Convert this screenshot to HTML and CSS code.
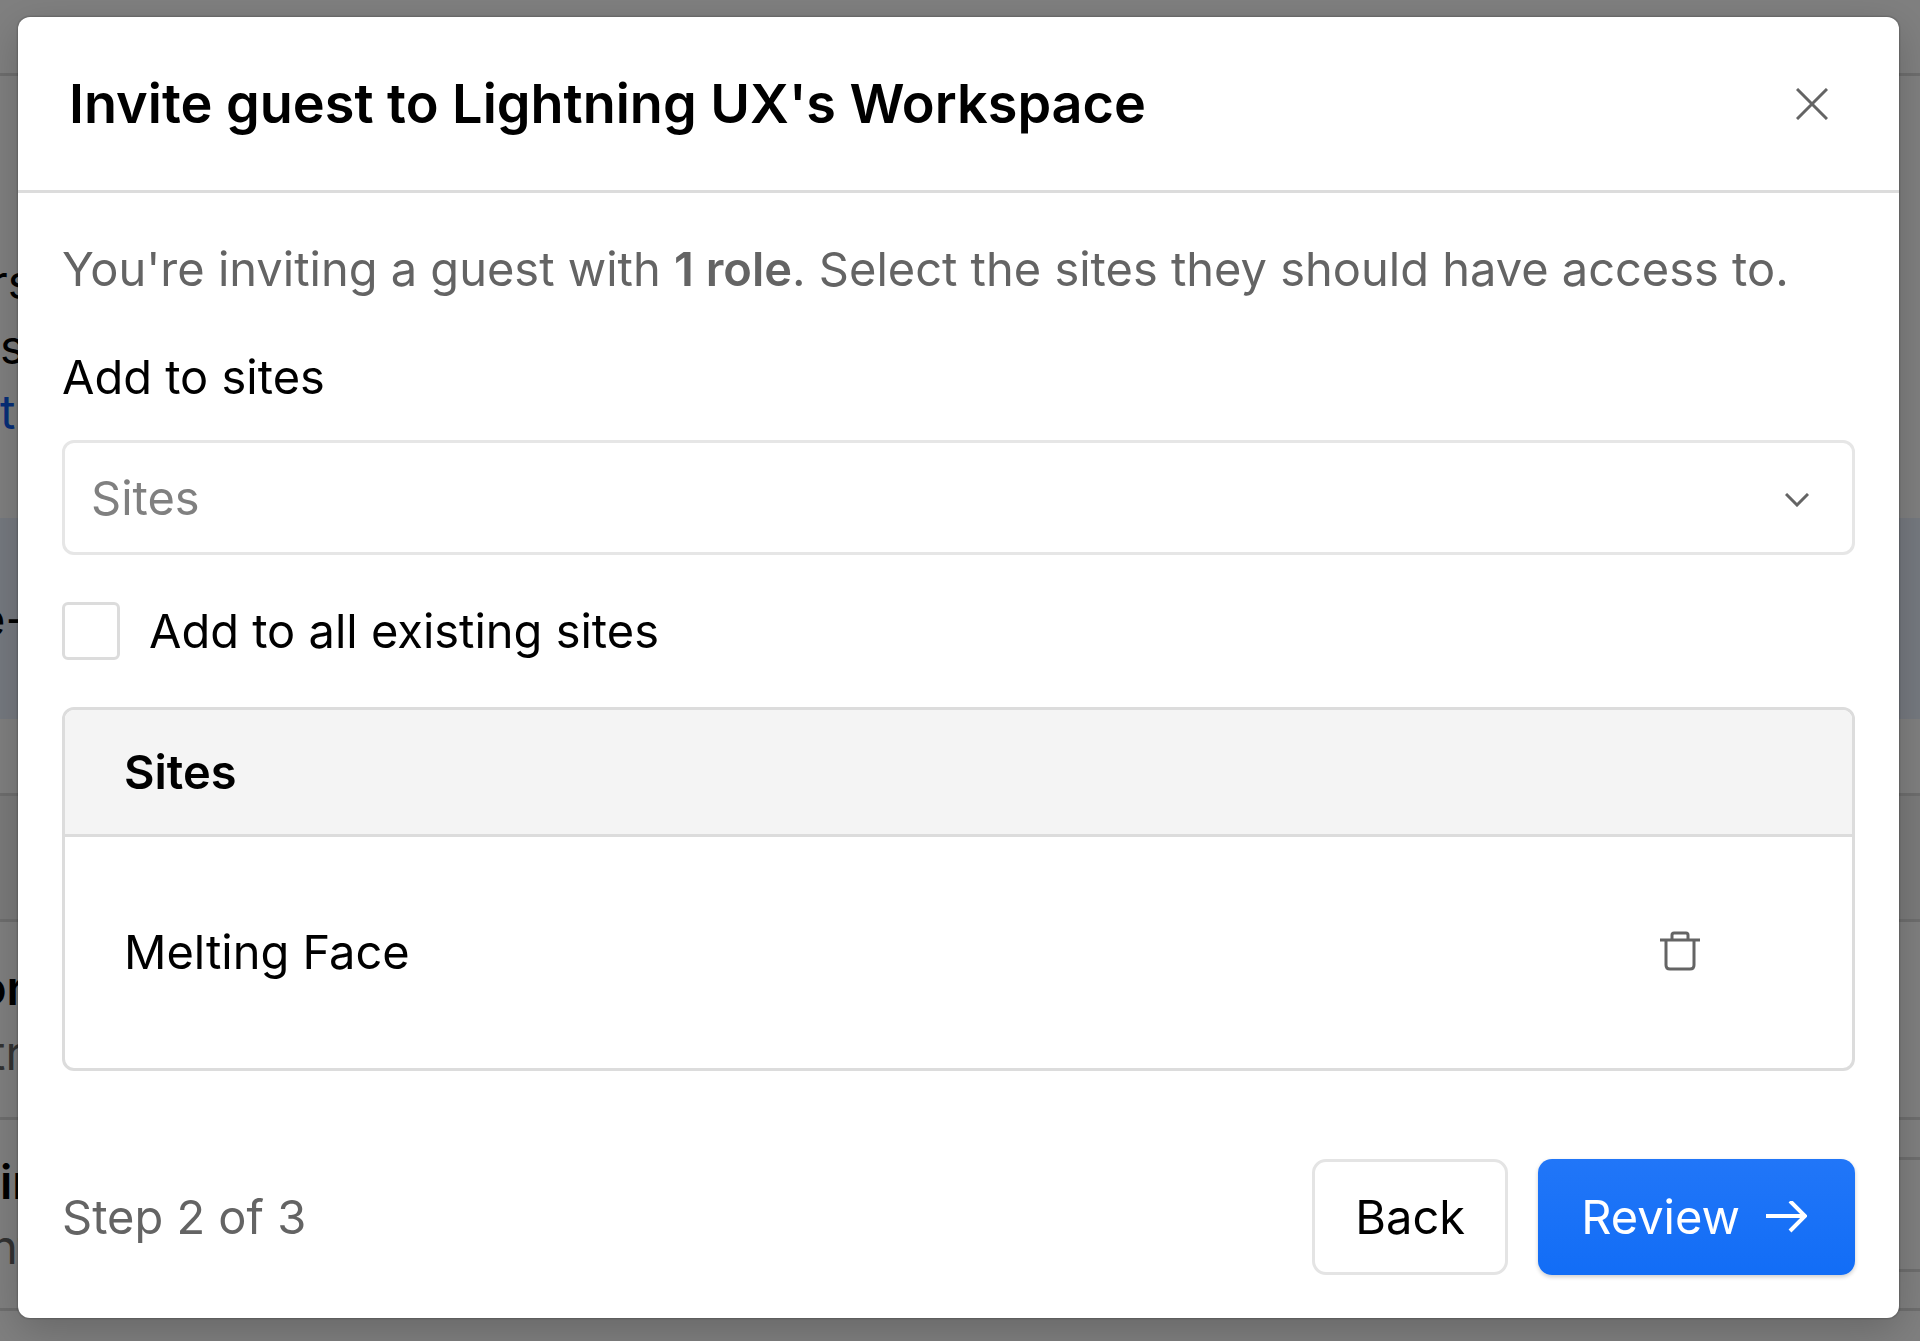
FILE: index.html
```html
<!DOCTYPE html>
<html lang="en">
<head>
    <meta charset="UTF-8">
    <meta name="viewport" content="width=device-width, initial-scale=1.0">
    <title>Invite guest</title>
    <link rel="stylesheet" href="styles.css">
</head>
<body>
<!-- page behind the modal -->
<div class="page">
    <div class="topbar"></div>
    <div class="intro">
        <p class="cut-sm">rs</p>
        <p>s</p>
        <p class="blue">t</p>
    </div>
    <div class="notice"><p class="cut-lg">e-</p></div>
    <div class="list-head"></div>
    <div class="list-row">
        <div>
            <p class="bold cut-lg">or</p>
            <p class="muted cut-sm">tr</p>
        </div>
    </div>
    <div class="list-row">
        <div>
            <p class="bold">in</p>
            <p class="muted cut-sm">nt</p>
        </div>
        <div class="list-box"></div>
    </div>
</div>

<!-- modal -->
<div class="overlay">
    <form class="modal" role="dialog" aria-labelledby="title">
        <div class="modal-header">
            <h1 id="title">Invite guest to Lightning UX's Workspace</h1>
            <button type="button" class="icon-button" aria-label="Close">
                <svg width="32" height="32" viewBox="0 0 32 32"><path d="M1 1L31 31M31 1L1 31"/></svg>
            </button>
        </div>
        <div class="modal-body">
            <p class="muted-text">You're inviting a guest with <b>1 role</b>. Select the sites they should have access to.</p>
            <label class="field-label" for="sites">Add to sites</label>
            <div class="select-wrap">
                <select id="sites">
                    <option>Sites</option>
                </select>
                <svg class="chevron" width="24" height="14" viewBox="0 0 24 14"><path d="M1 1L12 12L23 1"/></svg>
            </div>
            <div class="check-row">
                <input type="checkbox" id="all">
                <label for="all">Add to all existing sites</label>
            </div>
            <table class="sites">
                <thead>
                    <tr><th colspan="2">Sites</th></tr>
                </thead>
                <tbody>
                    <tr>
                        <td>Melting Face</td>
                        <td class="action">
                            <button type="button" class="icon-button" aria-label="Remove site">
                                <svg width="40" height="40" viewBox="0 0 40 40"><path d="M0 9H40M12 9V4Q12 2 14 2H26Q28 2 28 4V9M6 9V34Q6 38 10 38H30Q34 38 34 34V9"/></svg>
                            </button>
                        </td>
                    </tr>
                </tbody>
            </table>
        </div>
        <div class="modal-footer">
            <span class="muted-text">Step 2 of 3</span>
            <button type="button" class="btn">Back</button>
            <button type="submit" class="btn primary">Review
                <svg width="41" height="32" viewBox="0 0 41 32"><path d="M0 15H39M24 0L39 15L24 30"/></svg>
            </button>
        </div>
    </form>
</div>
</body>
</html>
```
FILE: styles.css
```css
* {
    box-sizing: border-box;
}
body {
    margin: 0;
    font-family: Inter, "Liberation Sans", sans-serif;
    font-size: 47px;
    line-height: 72px;
    font-optical-sizing: none;
    color: #000;
    background-color: #fff;
}
p, h1 {
    margin: 0;
}
svg {
    display: block;
    fill: none;
    stroke: currentColor;
    stroke-width: 3;
}

/* page behind */
.page {
    height: 100vh;
    overflow: hidden;
    line-height: 65px;
}
.topbar {
    height: 76px;
    border-bottom: 3px solid #dcdcdc;
}
.intro {
    padding: 173px 0 74px;
}
.blue {
    color: #0b5cf0;
}
.bold {
    font-weight: 600;
}
.muted {
    color: #646464;
}
.cut-sm {
    margin-left: -10px;
}
.cut-lg {
    margin-left: -22px;
}
.notice {
    padding: 68px 0;
    margin-bottom: 74px;
    background-color: #ebf2ff;
}
.list-head {
    height: 129px;
    border: solid #dcdcdc;
    border-width: 3px 0;
    background-color: #f4f4f4;
}
.list-row {
    display: flex;
    justify-content: space-between;
    padding: 33px 0 32px;
    border-bottom: 3px solid #dcdcdc;
}
.list-row + .list-row {
    padding: 29px 0;
}
.list-box {
    width: 160px;
    height: 115px;
    margin-top: 8px;
    border: solid #dcdcdc;
    border-width: 3px 0 3px 3px;
}

/* modal */
.overlay {
    position: fixed;
    top: 0;
    left: 0;
    width: 100%;
    height: 100%;
    padding: 17px 21px 22px 18px;
    background-color: rgba(0,0,0,0.5);
}
.modal {
    background-color: #fff;
    border-radius: 12px;
    box-shadow: 0 0 2px 1px rgba(0,0,0,0.2), 0 12px 40px rgba(0,0,0,0.2);
}
.modal-header {
    display: flex;
    align-items: center;
    justify-content: space-between;
    padding: 51px 71px 50px 51px;
    border-bottom: 3px solid #dcdcdc;
}
.modal-header h1 {
    font-size: 54px;
    font-weight: 600;
}
.icon-button {
    padding: 0;
    border: none;
    background: none;
    color: #646464;
}
.modal-body {
    padding: 40px 44px 0;
}
.muted-text {
    color: #646464;
}
.muted-text b {
    font-weight: 600;
}
.field-label {
    display: block;
    margin-top: 36px;
}
.select-wrap {
    position: relative;
    margin: 27px 0 40px;
}
select {
    display: block;
    appearance: none;
    width: 100%;
    height: 115px;
    padding: 0 26px;
    border: 3px solid #e6e6e6;
    border-radius: 12px;
    background-color: #fff;
    color: #808080;
    font: inherit;
}
.chevron {
    position: absolute;
    top: 53px;
    right: 46px;
    color: #646464;
}
.check-row {
    display: flex;
    align-items: center;
    gap: 29px;
    margin-bottom: 40px;
}
input[type=checkbox] {
    appearance: none;
    width: 58px;
    height: 58px;
    margin: 0;
    border: 3px solid #dcdcdc;
    border-radius: 6px;
}
.sites {
    width: 100%;
    border: 3px solid #dcdcdc;
    border-radius: 12px;
    border-spacing: 0;
    overflow: hidden;
}
.sites th, .sites td {
    padding: 26px 59px;
    text-align: left;
}
.sites th {
    font-weight: 600;
    background-color: #f4f4f4;
    border-bottom: 3px solid #dcdcdc;
}
.sites td {
    padding: 79px 59px 80px;
}
.sites .action {
    padding: 0 152px 4px 0;
}
.action .icon-button {
    display: block;
    margin-left: auto;
}
.modal-footer {
    display: flex;
    align-items: center;
    gap: 30px;
    padding: 88px 44px 43px;
}
.modal-footer .muted-text {
    margin-right: auto;
}
.btn {
    display: flex;
    align-items: center;
    gap: 26px;
    height: 116px;
    padding: 0 40px;
    border: 3px solid #e4e4e4;
    border-radius: 14px;
    background-color: #fff;
    color: #000;
    font: inherit;
}
.primary {
    padding: 0 48px 0 43px;
    border: none;
    background: linear-gradient(#2176f8, #126df6);
    box-shadow: 0 2px 4px rgba(0,0,0,0.2);
    color: #fff;
}
.primary svg {
    stroke-width: 4;
}
```
